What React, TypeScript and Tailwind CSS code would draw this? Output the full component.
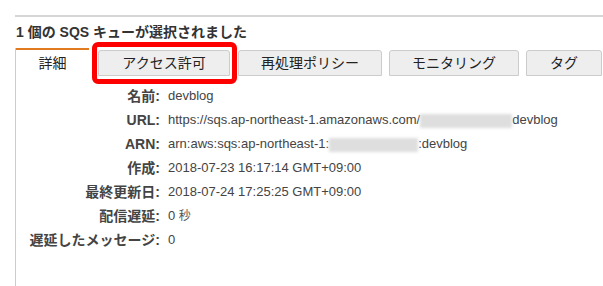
export default function App() {
  const tabs = [
    { label: "アクセス許可", w: "w-[132px]", ml: "ml-[9px]" },
    { label: "再処理ポリシー", w: "w-[144px]", ml: "ml-[8px]" },
    { label: "モニタリング", w: "w-[130px]", ml: "ml-[7px]" },
    { label: "タグ", w: "w-[76px]", ml: "ml-[7px]" },
  ];

  const rows: { label: string; value: React.ReactNode }[] = [
    { label: "名前:", value: "devblog" },
    {
      label: "URL:",
      value: (
        <>
          https://sqs.ap-northeast-1.amazonaws.com/
          <span className="inline-block w-[92px] h-[14px] bg-[#dedede] blur-[1.5px] align-middle" />
          devblog
        </>
      ),
    },
    {
      label: "ARN:",
      value: (
        <>
          arn:aws:sqs:ap-northeast-1:
          <span className="inline-block w-[89px] h-[14px] bg-[#dedede] blur-[1.5px] align-middle" />
          :devblog
        </>
      ),
    },
    { label: "作成:", value: "2018-07-23 16:17:14 GMT+09:00" },
    { label: "最終更新日:", value: "2018-07-24 17:25:25 GMT+09:00" },
    {
      label: "配信遅延:",
      value: (
        <>
          0 <span className="text-[12px] text-[#555]">秒</span>
        </>
      ),
    },
    { label: "遅延したメッセージ:", value: "0" },
  ];

  return (
    <div className="relative w-[603px] h-[286px] overflow-hidden bg-white font-['Liberation_Sans','Noto_Sans_CJK_JP',sans-serif] text-[#333]">
      <div className="ml-[15px] mt-[15px] h-[2px] bg-[#d6d6d6]" />

      <div className="ml-[16px] mt-[5px] h-[20px] leading-[20px] text-[14px] font-bold text-[#333]">
        1 個の SQS キューが選択されました
      </div>

      <div className="ml-[15px] mt-[6px] border-l border-[#cccccc] h-[300px]">
        <div className="flex items-start">
          <div className="w-[73px] h-[28px] border-t-2 border-[#e07b1f] bg-white flex items-center justify-center text-[14px] text-[#222]">
            詳細
          </div>
          {tabs.map((t) => (
            <div
              key={t.label}
              className={`${t.w} ${t.ml} mt-[2px] h-[26px] border border-[#cccccc] rounded-t-[3px] bg-[#eeeeee] flex items-center justify-center text-[14px] text-[#222]`}
            >
              {t.label}
            </div>
          ))}
        </div>

        <div className="pt-[8px]">
          {rows.map((r) => (
            <div key={r.label} className="flex items-center h-[24px]">
              <div className="w-[144px] text-right text-[14px] font-bold text-[#444] whitespace-nowrap">
                {r.label}
              </div>
              <div className="ml-[8px] text-[13px] text-[#444] whitespace-nowrap">{r.value}</div>
            </div>
          ))}
        </div>
      </div>

      <div className="absolute left-[92px] top-[42px] w-[145px] h-[42px] border-[5px] border-[#ff0000] rounded-[6px]" />
    </div>
  );
}
